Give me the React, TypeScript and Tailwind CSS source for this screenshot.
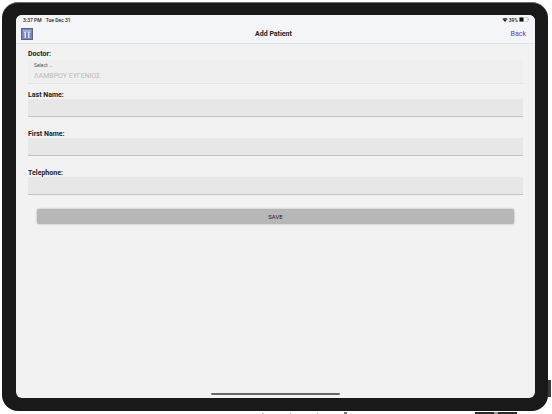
import { useState } from 'react';

interface TextFieldProps {
  id: string;
  label: string;
  type?: string;
}

function TextField({ id, label, type = 'text' }: TextFieldProps) {
  const [value, setValue] = useState('');

  return (
    <div className="flex flex-col">
      <label htmlFor={id} className="text-[7px] leading-[8px] font-bold text-[#1c1c1c]">
        {label}
      </label>
      <input
        id={id}
        type={type}
        value={value}
        onChange={e => setValue(e.target.value)}
        className="h-[18px] w-full rounded-t-[1px] border-b border-[#c2c2c2] bg-[#e7e7e7] px-1.5 text-[7px] text-[#222222] outline-none"
      />
    </div>
  );
}

function ClinicLogo() {
  return (
    <svg viewBox="0 0 24 24" className="size-3" role="img" aria-label="Clinic logo">
      <rect x="1" y="1" width="22" height="22" fill="#7784ca" stroke="#62646f" strokeWidth="2" />
      <path d="M6 4v5h4V4M14 4v5h4V4" fill="none" stroke="#dfe4fa" strokeWidth="1.600" />
      <path d="M8.500 9v11M15.500 9v11" stroke="#dfe4fa" strokeWidth="3" />
    </svg>
  );
}

function WifiIcon() {
  return (
    <svg viewBox="0 0 12 9" className="h-1 w-[6px]" aria-hidden="true">
      <path d="M6 9 0 2.500C3.500-.8 8.500-.8 12 2.500Z" fill="#222222" />
      <path d="M2 4.400c2.500-2 5.500-2 8 0" fill="none" stroke="#f4f5f8" strokeWidth=".8" />
    </svg>
  );
}

function BatteryIcon() {
  return (
    <svg viewBox="0 0 20 10" className="h-[5px] w-[10px]" aria-hidden="true">
      <rect x=".5" y=".5" width="17" height="9" rx="2.500" fill="none" stroke="#a5a5a8" />
      <rect x="1" y="1" width="8" height="8" rx="1" fill="#111111" />
      <path d="M19 3.500v3" stroke="#a5a5a8" strokeWidth="1.500" />
    </svg>
  );
}

function StatusBar() {
  return (
    <div className="flex h-[9px] items-center justify-between pr-1.5 pl-[7px] text-[5px] leading-[8px] font-medium text-[#222222]">
      <div className="flex gap-1">
        <span>3:37 PM</span>
        <span>Tue Dec 31</span>
      </div>
      <div className="flex items-center gap-px">
        <WifiIcon />
        <span>39%</span>
        <BatteryIcon />
      </div>
    </div>
  );
}

export default function App() {
  return (
    <div className="relative flex h-screen overflow-hidden bg-white pt-[2px] pr-1 pb-[3px] pl-[2px] font-['Roboto','Liberation_Sans',sans-serif]">
      {/* bits of the desk behind, showing past the case */}
      <div className="absolute right-px bottom-[17px] h-[17px] w-[3px] bg-[#3a3a3a]" />
      <div className="absolute right-[35px] bottom-0 h-[2px] w-[42px] bg-[#2b2b2b]">
        <div className="mx-auto h-full w-1 bg-[#9a9a9a]" />
      </div>
      <div className="absolute right-[205px] bottom-0 flex h-[2px] w-[85px] items-end justify-between">
        <div className="h-px w-[2px] bg-[#bdbdbd]" />
        <div className="h-[2px] w-px bg-[#cccccc]" />
        <div className="h-[2px] w-px bg-[#cccccc]" />
        <div className="h-[2px] w-[3px] bg-[#777777]" />
      </div>

      <div className="flex min-w-0 flex-1 rounded-[16px] border-t border-[#6d6d6d] bg-[#191919] pt-[12px] pr-[13px] pb-[13px] pl-[14px]">
        <div className="flex min-w-0 flex-1 flex-col overflow-hidden rounded-[6px] bg-[#f2f2f2]">
          <header className="border-b border-[#e2e3e5] bg-[#f4f5f8]">
            <StatusBar />
            <div className="grid h-[19px] grid-cols-3 items-center pr-[9px] pl-[5px]">
              <ClinicLogo />
              <h1 className="text-center text-[7px] leading-[8px] font-bold text-[#1c1c1c]">Add Patient</h1>
              <button type="button" className="cursor-pointer justify-self-end text-[7px] leading-[8px] text-[#6a35c0]">
                Back
              </button>
            </div>
          </header>

          <form
            className="flex flex-1 flex-col px-3 pt-[6px]"
            onSubmit={e => e.preventDefault()}
          >
            <div className="flex flex-col gap-[2px]">
              <span className="text-[7px] leading-[8px] font-bold text-[#1c1c1c]">Doctor:</span>
              <div className="flex flex-col border-b border-[#e4e4e4] bg-[#efefef] px-[6px] pt-px">
                <label htmlFor="doctor" className="text-[5px] leading-[8px] text-[#555555]">
                  Select ...
                </label>
                <select
                  id="doctor"
                  disabled
                  className="h-[14px] w-full appearance-none bg-transparent text-[7px] leading-[14px] text-[#b9b9b9] opacity-100"
                >
                  <option>ΛΑΜΒΡΟΥ ΕΥΓΕΝΙΟΣ</option>
                </select>
              </div>
            </div>

            <div className="mt-[7px] flex flex-col gap-[13px]">
              <TextField id="last-name" label="Last Name:" />
              <TextField id="first-name" label="First Name:" />
              <TextField id="telephone" label="Telephone:" type="tel" />
            </div>

            <button
              type="submit"
              className="mx-[9px] mt-[14px] h-[15px] cursor-pointer rounded-[2px] bg-[#b7b7b7] text-[6px] leading-[8px] text-[#222222] shadow-[0_0_2px_#a0a0a0]"
            >
              SAVE
            </button>
          </form>

          <div className="mx-auto mb-[3px] h-[2px] w-1/4 rounded-full bg-[#666666]" />
        </div>
      </div>
    </div>
  );
}
